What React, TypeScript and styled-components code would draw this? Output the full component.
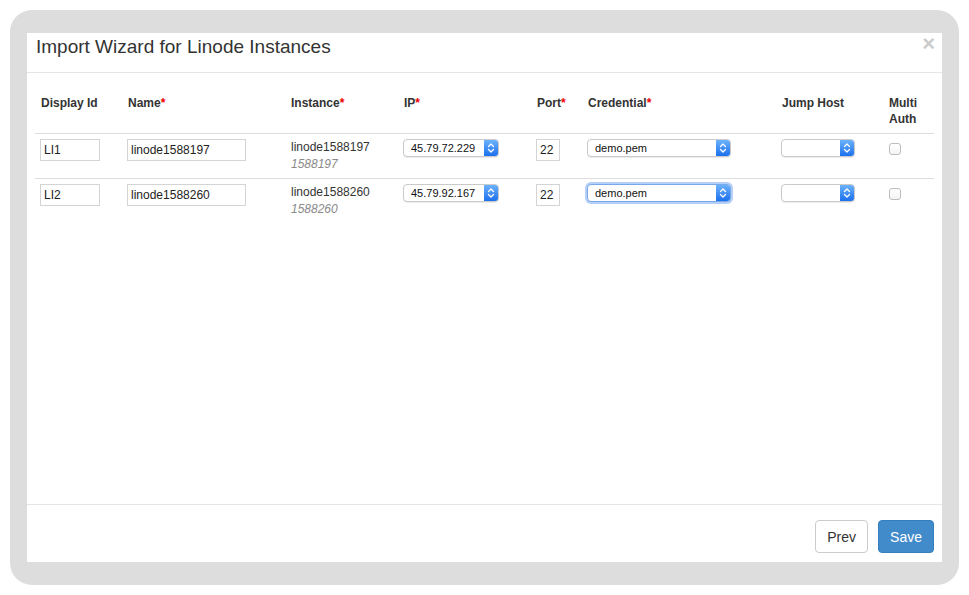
import React from "react";
import styled, { createGlobalStyle } from "styled-components";

const GlobalStyle = createGlobalStyle`
  html, body {
    margin: 0;
    padding: 0;
    background: #ffffff;
    font-family: "Liberation Sans", Arial, Helvetica, sans-serif;
    color: #333333;
  }
`;

type Row = {
  displayId: string;
  name: string;
  instance: string;
  instanceId: string;
  ip: string;
  port: string;
  credential: string;
  focused?: boolean;
};

const rows: Row[] = [
  {
    displayId: "LI1",
    name: "linode1588197",
    instance: "linode1588197",
    instanceId: "1588197",
    ip: "45.79.72.229",
    port: "22",
    credential: "demo.pem",
  },
  {
    displayId: "LI2",
    name: "linode1588260",
    instance: "linode1588260",
    instanceId: "1588260",
    ip: "45.79.92.167",
    port: "22",
    credential: "demo.pem",
    focused: true,
  },
];

const columns = [
  { label: "Display Id", width: 87 },
  { label: "Name", width: 163, required: true },
  { label: "Instance", width: 113, required: true },
  { label: "IP", width: 133, required: true },
  { label: "Port", width: 51, required: true },
  { label: "Credential", width: 194, required: true },
  { label: "Jump Host", width: 107 },
  { label: "Multi Auth", width: 51 },
];

function Chevrons() {
  return (
    <svg width="8" height="12" viewBox="0 0 8 12" fill="none">
      <path
        d="M1.5 4.5 L4 2 L6.5 4.5 M1.5 7.5 L4 10 L6.5 7.5"
        stroke="#ffffff"
        strokeWidth="1.3"
        strokeLinecap="round"
        strokeLinejoin="round"
      />
    </svg>
  );
}

function MacSelect({
  value,
  width,
  focused,
}: {
  value?: string;
  width: number;
  focused?: boolean;
}) {
  return (
    <SelectBox $width={width} $focused={focused}>
      <SelectValue>{value}</SelectValue>
      <SelectArrow>
        <Chevrons />
      </SelectArrow>
    </SelectBox>
  );
}

export default function App() {
  return (
    <>
      <GlobalStyle />
      <Frame>
        <Modal>
          <Header>
            <Title>Import Wizard for Linode Instances</Title>
            <Close>×</Close>
          </Header>
          <Body>
            <Table>
              <colgroup>
                {columns.map((c) => (
                  <col key={c.label} style={{ width: c.width }} />
                ))}
              </colgroup>
              <thead>
                <tr>
                  {columns.map((c) => (
                    <Th key={c.label}>
                      {c.label}
                      {c.required && <Req>*</Req>}
                    </Th>
                  ))}
                </tr>
              </thead>
              <tbody>
                {rows.map((r) => (
                  <tr key={r.displayId}>
                    <Td>
                      <TextInput $width={60} defaultValue={r.displayId} />
                    </Td>
                    <Td>
                      <TextInput $width={119} defaultValue={r.name} />
                    </Td>
                    <Td>
                      <InstanceName>{r.instance}</InstanceName>
                      <InstanceId>{r.instanceId}</InstanceId>
                    </Td>
                    <Td>
                      <MacSelect value={r.ip} width={96} />
                    </Td>
                    <Td>
                      <TextInput $width={24} defaultValue={r.port} />
                    </Td>
                    <Td>
                      <MacSelect
                        value={r.credential}
                        width={144}
                        focused={r.focused}
                      />
                    </Td>
                    <Td>
                      <MacSelect width={74} />
                    </Td>
                    <Td>
                      <Checkbox />
                    </Td>
                  </tr>
                ))}
              </tbody>
            </Table>
          </Body>
          <Footer>
            <Button>Prev</Button>
            <Button $primary>Save</Button>
          </Footer>
        </Modal>
      </Frame>
    </>
  );
}

const Frame = styled.div`
  margin: 10px;
  width: 949px;
  height: 575px;
  box-sizing: border-box;
  padding: 23px 17px;
  background: #dddddd;
  border-radius: 22px;
  display: flex;
`;

const Modal = styled.div`
  flex: 1;
  display: flex;
  flex-direction: column;
  background: #ffffff;
`;

const Header = styled.div`
  height: 40px;
  box-sizing: border-box;
  padding: 0 7px 0 9px;
  border-bottom: 1px solid #e5e5e5;
  display: flex;
  align-items: flex-start;
  justify-content: space-between;
`;

const Title = styled.h4`
  margin: 0;
  padding-top: 1px;
  font-size: 19px;
  line-height: 26px;
  font-weight: normal;
  color: #333333;
`;

const Close = styled.span`
  font-size: 22px;
  line-height: 21px;
  font-weight: bold;
  color: #000000;
  opacity: 0.2;
`;

const Body = styled.div`
  flex: 1;
  padding: 14px 8px 0;
`;

const Table = styled.table`
  width: 899px;
  border-collapse: collapse;
  table-layout: fixed;
  font-size: 12px;
`;

const Th = styled.th`
  text-align: left;
  vertical-align: top;
  padding: 8px 6px 6px;
  font-weight: bold;
  line-height: 16px;
  color: #333333;
  border-bottom: 1px solid #dddddd;
`;

const Req = styled.span`
  color: #ee0000;
`;

const Td = styled.td`
  vertical-align: top;
  padding: 5px 5px 5px;
  height: 34px;
  border-top: 1px solid #dddddd;
  tr:first-child > & {
    border-top: none;
  }
`;

const TextInput = styled.input<{ $width: number }>`
  box-sizing: border-box;
  width: ${({ $width }) => $width}px;
  height: 22px;
  margin: 0;
  padding: 0 3px;
  border: 1px solid #d4d4d4;
  border-radius: 0;
  font-family: inherit;
  font-size: 12px;
  color: #222222;
  outline: none;
`;

const InstanceName = styled.div`
  padding-left: 1px;
  line-height: 17px;
  color: #333333;
`;

const InstanceId = styled.div`
  padding-left: 1px;
  line-height: 17px;
  font-style: italic;
  color: #8a8a8a;
`;

const SelectBox = styled.div<{ $width: number; $focused?: boolean }>`
  box-sizing: border-box;
  width: ${({ $width }) => $width}px;
  height: 18px;
  display: flex;
  border: 1px solid ${({ $focused }) => ($focused ? "#7aa7e8" : "#cacaca")};
  border-radius: 4px;
  overflow: hidden;
  background: #ffffff;
  box-shadow: ${({ $focused }) =>
    $focused
      ? "0 0 0 2px rgba(92, 150, 235, 0.45)"
      : "0 1px 1px rgba(0, 0, 0, 0.08)"};
`;

const SelectValue = styled.div`
  flex: 1;
  padding-left: 7px;
  line-height: 16px;
  font-size: 11px;
  color: #111111;
  white-space: nowrap;
  overflow: hidden;
`;

const SelectArrow = styled.div`
  width: 14px;
  display: flex;
  align-items: center;
  justify-content: center;
  background: linear-gradient(#6cb2fb, #1b70ee);
`;

const Checkbox = styled.div`
  margin: 4px 0 0 1px;
  width: 12px;
  height: 12px;
  box-sizing: border-box;
  border: 1px solid #bdbdbd;
  border-radius: 3px;
  background: linear-gradient(#ffffff, #f4f4f4);
`;

const Footer = styled.div`
  display: flex;
  justify-content: flex-end;
  gap: 10px;
  padding: 15px 8px 9px;
  border-top: 1px solid #e5e5e5;
`;

const Button = styled.button<{ $primary?: boolean }>`
  height: 33px;
  padding: 0 11px;
  font-family: inherit;
  font-size: 14px;
  border-radius: 4px;
  border: 1px solid ${({ $primary }) => ($primary ? "#357ebd" : "#cccccc")};
  background: ${({ $primary }) => ($primary ? "#428bca" : "#ffffff")};
  color: ${({ $primary }) => ($primary ? "#ffffff" : "#333333")};
`;
